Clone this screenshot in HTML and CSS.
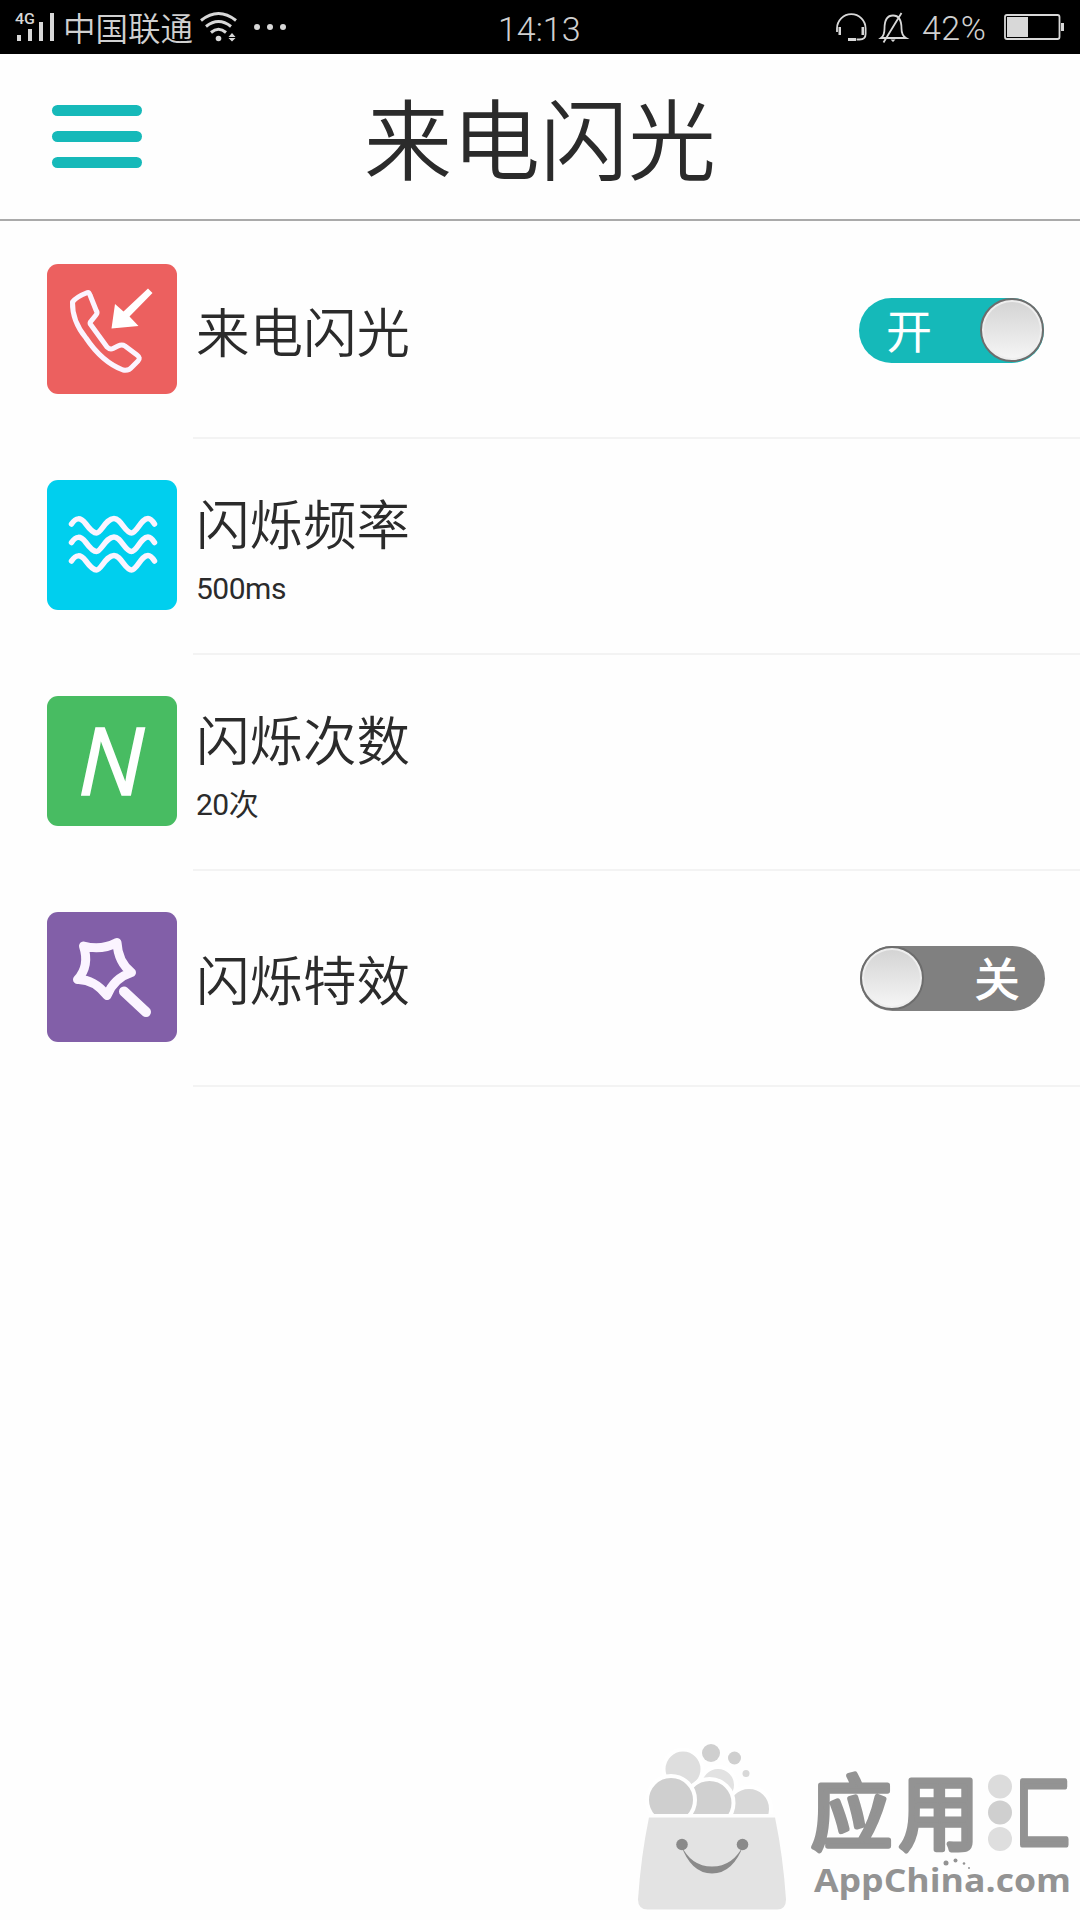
FILE: index.html
```
<!DOCTYPE html>
<html lang="zh-CN">
<head>
  <meta charset="UTF-8">
  <title>来电闪光</title>
  <link rel="stylesheet" href="styles.css">
</head>
<body>
  <div class="status-bar">
    <svg class="signal" width="46" height="54" viewBox="12 0 46 54">
      <text x="15" y="23.500" font-size="14" textLength="20" lengthAdjust="spacingAndGlyphs">4G</text>
      <path d="M17 35h4v6h-4zM28 29h4v12h-4zM39 22h4v19h-4zM50 13h4v28h-4z"/>
    </svg>
    <span class="carrier">中国联通</span>
    <svg class="wifi" width="42" height="54" viewBox="198 0 42 54">
      <g class="line">
        <path d="M201 20.500Q218.500 6.500 236 20.500"/>
        <path d="M206 26.500Q218.500 16.500 231 26.500"/>
        <path d="M211 32.500Q218.500 26 226 32.500"/>
      </g>
      <circle cx="218.500" cy="38.500" r="2.800"/>
      <path d="M232 33l3.500 4h-7zM232 41.500l3.500-3.500h-7z"/>
    </svg>
    <svg class="dots" width="36" height="54" viewBox="252 0 36 54">
      <circle cx="257" cy="27" r="3"/>
      <circle cx="270" cy="27" r="3"/>
      <circle cx="283" cy="27" r="3"/>
    </svg>
    <span class="clock">14:13</span>
    <svg class="modes" width="76" height="54" viewBox="834 0 76 54">
      <g class="thin">
        <path d="M837 32v-3.500a14.300 14.300 0 0 1 28.600 0V34q0 5.500-6 5.500h-3"/>
        <path d="M881 38q3.500-2.500 3.500-9.500 0-13 8.500-13t8.500 13q0 7 4.500 9.500zM883.500 42.500l18-29.500"/>
      </g>
      <path d="M838.500 27h2.500v8h-2.500zM861.500 27h2.500v8h-2.500zM848 38h8v3h-8zM890.500 39.500h5l-2.500 2.500z"/>
    </svg>
    <span class="percent">42%</span>
    <svg class="battery" width="62" height="54" viewBox="1003 0 62 54">
      <rect class="thin" x="1005" y="15" width="54.500" height="24" rx="2"/>
      <path d="M1007 17h21v20h-21zM1061 23h3v8h-3z"/>
    </svg>
  </div>

  <header class="header">
    <div class="menu"><i></i><i></i><i></i></div>
    <h1>来电闪光</h1>
  </header>

  <main class="list">
    <section class="row">
      <div class="icon red">
        <svg viewBox="0 0 130 130">
          <path class="stroke" stroke-width="5" d="M40.500 28.500Q29 33 25.500 38 Q25 57 39 74 Q55 98 76 106 Q82 107 85 103 L91 97 Q94 94 90 91 L78 82 Q75 80 71 82 L66 84.500 Q63 86 60 83 L44 61 Q42 59 45 56 L49 51 Q51 49 49 46 L43 31Q42 28 40.500 28.500Z"/>
          <path fill="#fff" d="M101 24.500l4.500 4.500-23 23.500 9 9.500-27 2.500 3.500-24.500 8.500 7.500z"/>
        </svg>
      </div>
      <div class="cell">
        <div class="label"><h2>来电闪光</h2></div>
        <div class="toggle on"><span>开</span><b></b></div>
      </div>
    </section>

    <section class="row">
      <div class="icon cyan">
        <svg viewBox="0 0 130 130">
          <g class="stroke" stroke-width="5.500">
            <path d="M24.500 44Q31 34 38.500 43.500C44 51 47 53 49.500 53 54 53 59 38.500 67 38.500 74 38.500 78 53 84.500 53 90 53 94 38.500 101 38.500Q104 38.500 107.500 44"/>
            <path d="M24.500 62.500Q31 52.500 38.500 62C44 69.500 47 71.500 49.500 71.500 54 71.500 59 57 67 57 74 57 78 71.500 84.500 71.500 90 71.500 94 57 101 57Q104 57 107.500 62.500"/>
            <path d="M24.500 81Q31 71 38.500 80.500C44 88 47 90 49.500 90 54 90 59 75.500 67 75.500 74 75.500 78 90 84.500 90 90 90 94 75.500 101 75.500Q104 75.500 107.500 81"/>
          </g>
        </svg>
      </div>
      <div class="cell">
        <div class="label two-line"><h2>闪烁频率</h2><p>500ms</p></div>
      </div>
    </section>

    <section class="row">
      <div class="icon green"><em>N</em></div>
      <div class="cell">
        <div class="label two-line"><h2>闪烁次数</h2><p>20次</p></div>
      </div>
    </section>

    <section class="row">
      <div class="icon purple">
        <svg viewBox="0 0 130 130">
          <path class="stroke" stroke-width="9" d="M36.500 34Q54 39 70 30.500Q71 50 84.500 60.500Q67 66 60 83.500Q47 67 30.500 67.500Q43 54 36.500 34Z"/>
          <path class="stroke" stroke-width="10" d="M77 79.500L99 100"/>
        </svg>
      </div>
      <div class="cell">
        <div class="label"><h2>闪烁特效</h2></div>
        <div class="toggle off"><b></b><span>关</span></div>
      </div>
    </section>
  </main>

  <footer class="footer">
    <svg width="450" height="190" viewBox="630 1730 450 190">
      <!-- bubbles -->
      <g stroke="#fff" stroke-width="4">
        <circle cx="683" cy="1769" r="19.500" fill="#dedede"/>
        <circle cx="718" cy="1785" r="18" fill="#e2e2e2"/>
        <circle cx="749" cy="1809" r="22" fill="#d8d8d8"/>
        <circle cx="709.500" cy="1803" r="24" fill="#d0d0d0"/>
        <circle cx="671" cy="1800" r="24" fill="#cfcfcf"/>
      </g>
      <circle cx="711" cy="1753" r="9" fill="#cfcfcf"/>
      <circle cx="734.500" cy="1758" r="6.500" fill="#cfcfcf"/>
      <circle cx="746" cy="1773.500" r="3.500" fill="#d8d8d8"/>
      <!-- bag -->
      <path fill="#fefefe" d="M640 1814h140v20H640z"/>
      <path fill="#e3e3e3" d="M649 1817.500h126q8 38 11 82 0 10-9 10H648q-10 0-10-10 3-44 11-82z"/>
      <g fill="#8a8a8a">
        <circle cx="682" cy="1844.500" r="5.800"/>
        <circle cx="742.500" cy="1844.500" r="5.800"/>
        <path d="M681 1845Q691 1873.500 712 1873.500T743.500 1845Q733 1866.500 712 1866.500T681 1845z"/>
      </g>
      <g class="brand">
        <text x="811" y="1843" font-size="81">应</text>
        <text x="899" y="1843" font-size="81" textLength="80" lengthAdjust="spacingAndGlyphs">用</text>
        <text x="1015" y="1843" font-size="81" textLength="57" lengthAdjust="spacingAndGlyphs">匚</text>
        <text class="domain" x="814" y="1892" font-size="33" textLength="257" lengthAdjust="spacingAndGlyphs">AppChina.com</text>
      </g>
      <circle cx="1000" cy="1786.500" r="12" fill="#dcdcdc"/>
      <circle cx="1000" cy="1812.500" r="12" fill="#cfcfcf"/>
      <circle cx="1000" cy="1839" r="12" fill="#dedede"/>
      <g fill="#939393">
        <circle cx="946" cy="1863" r="2.500"/>
        <circle cx="955.500" cy="1860.500" r="2"/>
        <circle cx="964" cy="1863.500" r="1.300"/>
        <circle cx="969" cy="1868" r="1"/>
      </g>
    </svg>
  </footer>
</body>
</html>
```
FILE: styles.css
```
* {
  box-sizing: border-box;
}
body {
  margin: 0;
  height: 1920px;
  display: flex;
  flex-direction: column;
  overflow: hidden;
  background: #fefefe;
  color: #2b2b2b;
  font-family: "Noto Sans CJK SC", sans-serif;
  font-weight: 350;
}
h1, h2, p {
  margin: 0;
  font-weight: 350;
}
svg {
  display: block;
}

/* status bar */
.status-bar {
  height: 54px;
  flex: none;
  display: flex;
  align-items: center;
  padding-left: 12px;
  background: #000;
  color: #d0d0d0;
  fill: #d8d8d8;
}
.status-bar svg {
  flex: none;
}
.signal {
  font-family: Roboto, sans-serif;
  font-weight: 500;
}
.carrier {
  width: 134px;
  margin-left: 5px;
  font-size: 32.500px;
  line-height: 54px;
  white-space: nowrap;
}
.wifi {
  margin-left: 1px;
}
.dots {
  margin-left: 12px;
}
.line {
  fill: none;
  stroke: #d8d8d8;
  stroke-width: 3;
}
.thin {
  fill: none;
  stroke: #d8d8d8;
  stroke-width: 1.800;
}
.clock, .percent {
  font-family: Roboto, sans-serif;
  font-weight: 300;
  font-size: 34px;
  line-height: 54px;
  padding-top: 4px;
  white-space: nowrap;
}
.clock {
  width: 90px;
  margin-left: 210px;
}
.modes {
  margin-left: 246px;
}
.percent {
  width: 70px;
  margin-left: 12px;
  padding-top: 2px;
  letter-spacing: 0.500px;
}
.battery {
  margin-left: 11px;
}

/* header */
.header {
  height: 167px;
  flex: none;
  display: grid;
  grid-template-columns: 90px 1fr 90px;
  padding: 0 52px;
  border-bottom: 2px solid #aaa;
}
.menu {
  display: flex;
  flex-direction: column;
  gap: 15px;
  padding-top: 51px;
}
.menu i {
  height: 11px;
  border-radius: 6px;
  background: #16b9b9;
}
.header h1 {
  font-size: 88px;
  line-height: 162px;
  text-align: center;
}

/* settings list */
.list {
  padding-top: 2px;
}
.row {
  height: 216px;
  display: flex;
  padding-left: 47px;
}
.icon {
  width: 130px;
  height: 130px;
  flex: none;
  margin-top: 41px;
  border-radius: 11px;
}
.red {
  background: #ec605f;
}
.cyan {
  background: #00cfee;
}
.green {
  background: #48bc62;
}
.purple {
  background: #825fa8;
}
.stroke {
  fill: none;
  stroke: #fbf4ff;
  stroke-linecap: round;
  stroke-linejoin: round;
}
.icon em {
  display: block;
  padding-right: 2px;
  font: italic 400 94px/126px "Open Sans", sans-serif;
  text-align: center;
  color: #fff;
  -webkit-text-stroke: 1.500px #fff;
}
.cell {
  flex: 1;
  display: flex;
  align-items: center;
  justify-content: space-between;
  margin-left: 16px;
  padding: 0 36px 0 3px;
  border-bottom: 2px solid #f3f3f3;
}
.label h2 {
  font-size: 53.500px;
  line-height: 74px;
}
.label p {
  margin-top: 7px;
  font-family: Roboto, "Noto Sans CJK SC", sans-serif;
  font-size: 30px;
  line-height: 46px;
  font-weight: 400;
  letter-spacing: -0.500px;
}
.two-line {
  padding-top: 4px;
}
.toggle {
  width: 185px;
  height: 65px;
  display: flex;
  align-items: center;
  justify-content: space-between;
  border-radius: 33px;
  color: #fff;
  font-size: 46px;
}
.toggle span {
  padding-bottom: 4px;
}
.toggle b {
  width: 64px;
  height: 64px;
  border: 2px solid #6d6d6d;
  border-radius: 50%;
  background: linear-gradient(#d3d3d3, #f6f6f6);
  box-shadow: inset 0 0 0 2px #eee;
}
.on {
  padding-left: 27px;
  background: #15b9b9;
  font-weight: 400;
}
.off {
  padding-right: 25px;
  margin-right: -1px;
  background: #808080;
  font-weight: 500;
}

/* watermark */
.footer {
  margin-top: auto;
  display: flex;
  justify-content: flex-end;
}
.brand {
  fill: #939393;
  stroke: #939393;
  stroke-width: 5.500;
  stroke-linejoin: round;
  font-weight: 400;
}
.domain {
  stroke-width: 0;
  font-family: "Open Sans", sans-serif;
  font-weight: 700;
}
```
